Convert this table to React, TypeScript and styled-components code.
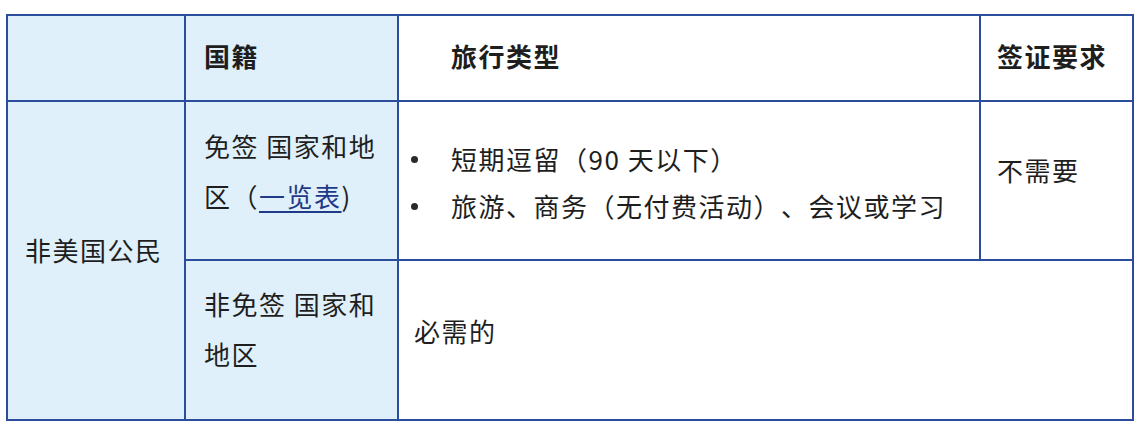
import React from "react";
import styled, { createGlobalStyle } from "styled-components";

const GlobalStyle = createGlobalStyle`
  html, body { margin: 0; padding: 0; background: #ffffff; }
  body {
    font-family: "Noto Sans CJK SC", "Noto Sans", sans-serif;
    color: #1e1e1e;
    text-spacing-trim: space-all;
  }
`;

const Page = styled.div`
  width: 1140px;
  height: 436px;
  padding: 14px 0 0 6px;
  box-sizing: border-box;
  background: #ffffff;
`;

const Table = styled.table`
  width: 1126px;
  table-layout: fixed;
  border-collapse: collapse;
  border: 2px solid #2c4d9b;
  font-size: 26px;
  letter-spacing: 1.5px;
`;

const Col = styled.col<{ $w: number }>`
  width: ${(p) => p.$w}px;
`;

const Cell = styled.td<{ $shade?: boolean; $pl?: number; $pt?: number; $valign?: string; $h?: number }>`
  border: 2px solid #2c4d9b;
  background: ${(p) => (p.$shade ? "#dff0fa" : "#ffffff")};
  padding: ${(p) => p.$pt ?? 0}px 4px 0 ${(p) => p.$pl ?? 18}px;
  vertical-align: ${(p) => p.$valign ?? "top"};
  height: ${(p) => (p.$h ? `${p.$h}px` : "auto")};
  line-height: 50px;
  box-sizing: border-box;
`;

const HeadCell = styled(Cell).attrs({ as: "th" })`
  font-weight: 700;
  text-align: left;
  vertical-align: middle;
  padding-bottom: 4px;
`;

const Link = styled.a`
  color: #1f3a86;
  text-decoration: underline;
  text-underline-offset: 4px;
`;

const BulletList = styled.ul`
  margin: 0;
  padding: 0;
  list-style: none;
  line-height: 47px;
`;

const Bullet = styled.li`
  position: relative;
  padding-left: 40px;
  white-space: nowrap;
  &::before {
    content: "";
    position: absolute;
    left: 0;
    top: 21px;
    width: 7px;
    height: 7px;
    border-radius: 50%;
    background: #2a2a2a;
  }
`;

export default function App() {
  return (
    <>
      <GlobalStyle />
      <Page>
        <Table>
          <colgroup>
            <Col $w={178} />
            <Col $w={213} />
            <Col $w={582} />
            <Col $w={153} />
          </colgroup>
          <thead>
            <tr>
              <HeadCell $shade $h={86} />
              <HeadCell $shade $pl={18} $h={86}>国籍</HeadCell>
              <HeadCell $pl={52} $h={86}>旅行类型</HeadCell>
              <HeadCell $pl={16} $h={86}>签证要求</HeadCell>
            </tr>
          </thead>
          <tbody>
            <tr>
              <Cell $shade rowSpan={2} $pl={17} $valign="middle" style={{ paddingBottom: 22 }}>
                非美国公民
              </Cell>
              <Cell $shade $pt={19} $h={159}>
                免签 国家和地区（<Link>一览表</Link>)
              </Cell>
              <Cell $pl={12} $pt={33} $h={159}>
                <BulletList>
                  <Bullet>短期逗留（90 天以下）</Bullet>
                  <Bullet>旅游、商务（无付费活动）、会议或学习</Bullet>
                </BulletList>
              </Cell>
              <Cell $pl={16} $pt={43} $h={159}>不需要</Cell>
            </tr>
            <tr>
              <Cell $shade $pt={18} $h={160}>
                非免签 国家和地区
              </Cell>
              <Cell colSpan={2} $pl={15} $pt={45} $h={160}>
                必需的
              </Cell>
            </tr>
          </tbody>
        </Table>
      </Page>
    </>
  );
}
